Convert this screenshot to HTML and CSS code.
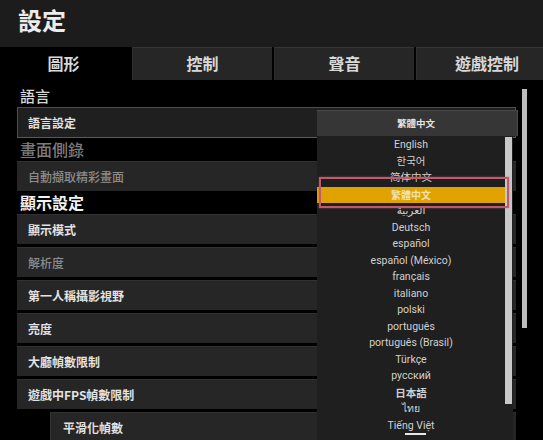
FILE: index.html
```html
<!DOCTYPE html>
<html lang="zh-Hant">
<head>
<meta charset="utf-8">
<title>設定</title>
<link rel="stylesheet" href="styles.css">
</head>
<body>
<div class="page">
  <header class="header"><h1 class="title">設定</h1></header>
  <nav class="tabs">
    <div class="tab tab-active">圖形</div>
    <div class="tab">控制</div>
    <div class="tab">聲音</div>
    <div class="tab tab-last">遊戲控制</div>
  </nav>
  <main class="body">
    <div class="content">
      <div class="section section-first">語言</div>
      <div class="row row-focus">語言設定</div>
      <div class="section section-dim">畫面側錄</div>
      <div class="row row-dim">自動擷取精彩畫面</div>
      <div class="section section-bright">顯示設定</div>
      <div class="rows">
        <div class="row">顯示模式</div>
        <div class="row row-dim">解析度</div>
        <div class="row">第一人稱攝影視野</div>
        <div class="row">亮度</div>
        <div class="row">大廳幀數限制</div>
        <div class="row">遊戲中FPS幀數限制</div>
        <div class="row row-sub">平滑化幀數</div>
      </div>
    </div>
    <div class="scroll-outer"></div>

    <div class="dropdown">
      <div class="dd-head">繁體中文</div>
      <div class="dd-list">
        <ul class="dd-items">
          <li class="dd-item">English</li>
          <li class="dd-item">한국어</li>
          <li class="dd-item">简体中文</li>
          <li class="dd-item dd-selected">繁體中文</li>
          <li class="dd-item">العربية</li>
          <li class="dd-item">Deutsch</li>
          <li class="dd-item">español</li>
          <li class="dd-item">español (México)</li>
          <li class="dd-item">français</li>
          <li class="dd-item">italiano</li>
          <li class="dd-item">polski</li>
          <li class="dd-item">português</li>
          <li class="dd-item">português (Brasil)</li>
          <li class="dd-item">Türkçe</li>
          <li class="dd-item">русский</li>
          <li class="dd-item dd-cjk">日本語</li>
          <li class="dd-item">ไทย</li>
          <li class="dd-item dd-last">Tiếng Việt</li>
        </ul>
        <div class="dd-scroll"><div class="dd-thumb"></div></div>
        <div class="dd-mark"></div>
      </div>
    </div>
  </main>
</div>
</body>
</html>
```

FILE: styles.css
```css
* { box-sizing: border-box; }
html, body { margin: 0; padding: 0; background: #000; }
body {
  width: 543px;
  height: 440px;
  overflow: hidden;
  font-family: "Noto Sans CJK TC", "Noto Sans", sans-serif;
  color: #e0e0e0;
}
.page { width: 543px; height: 440px; overflow: hidden; }

.header {
  height: 47px;
  background: #1c1c1c;
  padding: 4px 0 0 18px;
}
.title {
  margin: 0;
  font-size: 24px;
  line-height: 32px;
  font-weight: 700;
  color: #ececec;
}

.tabs {
  display: flex;
  gap: 2px;
  height: 33px;
  background: #000;
  width: 560px;
}
.tab {
  width: 140px;
  flex: none;
  background: #262626;
  border-top: 1px solid #363636;
  border-left: 1px solid #2e2e2e;
  text-align: center;
  font-size: 16px;
  font-weight: 700;
  line-height: 31px;
  color: #d8d8d8;
}
.tab-active {
  width: 130px;
  background: #000;
  border-color: #000;
  padding-right: 4px;
}
.tab-last { width: 145px; padding-right: 4px; }

.body {
  position: relative;
  display: flex;
  height: 360px;
  overflow: hidden;
}
.content {
  margin-left: 17px;
  width: 499px;
  padding-top: 6px;
}
.section {
  height: 23px;
  padding-left: 3px;
  font-size: 16px;
  line-height: 23px;
  font-weight: 500;
  color: #d6d6d6;
}
.section-first { height: 21px; font-size: 15px; line-height: 20px; }
.section-dim { color: #7c7c7c; }
.section-bright { color: #f2f2f2; font-weight: 700; }

.row {
  height: 30px;
  background: #262626;
  border-top: 1px solid #313131;
  padding-left: 11px;
  font-size: 12px;
  font-weight: 700;
  line-height: 29px;
  color: #e2e2e2;
}
.row-focus {
  height: 31px;
  background: #1f1f1f;
  border: 1px solid #4e4e4e;
  border-bottom-color: #5a5a5a;
  padding-left: 10px;
}
.row-dim { color: #8c8c8c; font-weight: 500; }
.rows { display: flex; flex-direction: column; gap: 3px; }
.row-sub { margin-left: 33px; padding-left: 12px; border-left: 1px solid #333; }

.scroll-outer {
  flex: none;
  margin: 9px 0 0 6px;
  width: 5px;
  height: 239px;
  background: #bdbdbd;
}

/* dropdown overlay */
.dropdown {
  position: absolute;
  left: 317px;
  top: 30px;
  width: 201px;
}
.dd-head {
  height: 26px;
  background: #363636;
  border-top: 1px solid #4a4a4a;
  border-right: 1px solid #4a4a4a;
  text-align: center;
  font-size: 9.5px;
  font-weight: 700;
  line-height: 25px;
  color: #e6e6e6;
  padding-right: 2px;
}
.dd-list {
  position: relative;
  display: flex;
  width: 196px;
  margin-top: 1px;
  background: #1f1f1f;
  height: 303px;
}
.dd-items {
  list-style: none;
  margin: 0;
  padding: 0;
  width: 188px;
}
.dd-item {
  height: 16.5px;
  text-align: center;
  font-family: Roboto, "Noto Sans", "DejaVu Sans", "Noto Sans CJK TC", sans-serif;
  font-size: 10.5px;
  line-height: 16.5px;
  color: #d0d0d0;
  white-space: nowrap;
}
.dd-cjk { font-family: "Noto Sans CJK JP", sans-serif; font-weight: 700; }
.dd-selected {
  background: #e0a200;
  color: #f3e2b0;
  font-family: "Noto Sans CJK TC", sans-serif;
  font-weight: 700;
  font-size: 10px;
}
.dd-scroll {
  flex: none;
  width: 7px;
  height: 300px;
}
.dd-thumb {
  width: 7px;
  height: 267px;
  background: #c8c8c8;
}
.dd-mark {
  position: absolute;
  z-index: 2;
  left: 2px;
  top: 40px;
  width: 190px;
  height: 31px;
  border: 2px solid #c2596a;
  box-shadow: 0 0 2px rgba(194, 89, 106, 0.6);
}
.dd-last { position: relative; }
.dd-last::after {
  content: "";
  position: absolute;
  left: 88px;
  width: 21px;
  bottom: -1px;
  height: 2px;
  background: #e8e8e8;
}
```
